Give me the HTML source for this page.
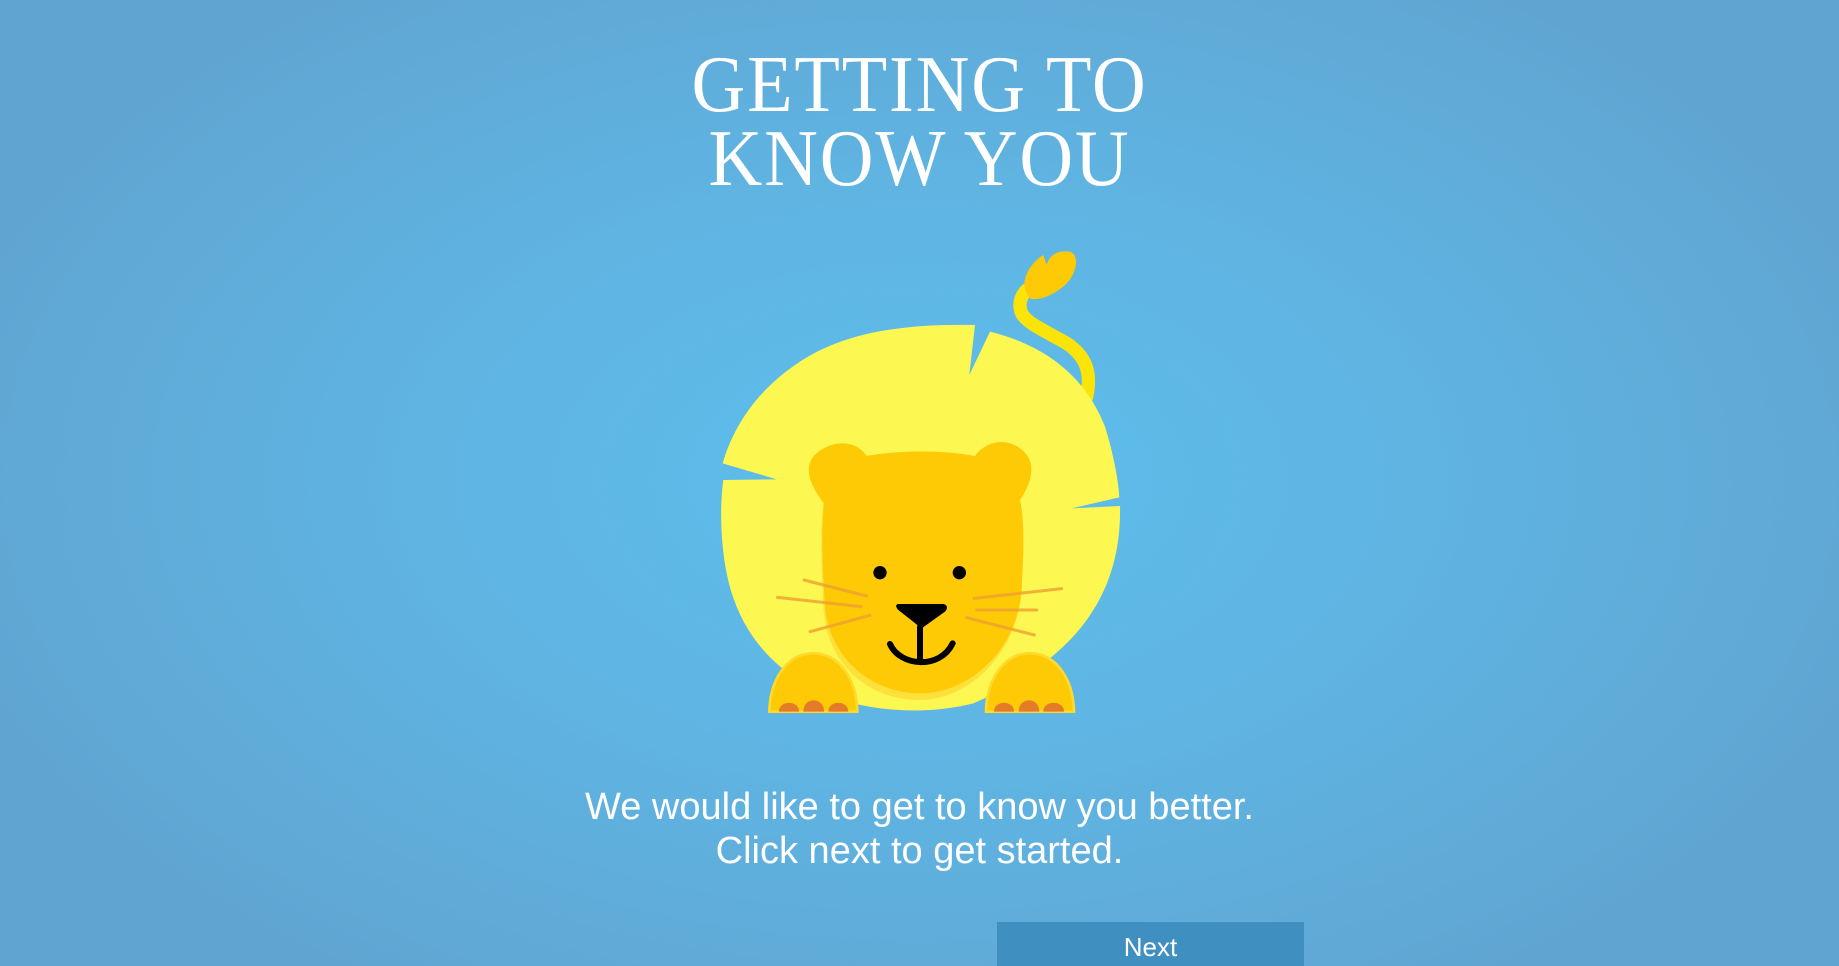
<!DOCTYPE html>
<html><head><meta charset="utf-8"><style>
html,body{margin:0;padding:0;width:1839px;height:966px;overflow:hidden}
body{background:radial-gradient(ellipse 1000px 600px at 920px 480px,#5ebeec 0%,#5fb4e2 50%,#60a5d2 100%);font-family:"Liberation Sans",sans-serif;position:relative}
.t{position:absolute;left:0;width:1839px;text-align:center;color:#fff;font-family:"Liberation Serif",serif;font-size:80px;line-height:74px;top:48px;letter-spacing:2px;transform:scaleX(0.93);transform-origin:920px 0}
.p{position:absolute;left:0;width:1839px;text-align:center;color:#fff;font-size:38px;line-height:44px;top:785px}
.b{position:absolute;left:997px;top:922px;width:307px;height:44px;background:#3f90c0;color:#fff;font-size:26px;text-align:center;line-height:50px}
svg{position:absolute;left:700px;top:240px}
</style></head><body>
<div class="t">GETTING TO<br>KNOW YOU</div>
<svg width="440" height="480" viewBox="0 0 1320 1440">
<path d="M1160 470 C1175 400 1160 350 1100 310 C1040 275 980 250 965 220 C955 195 960 170 980 150" stroke="#fbe40a" stroke-width="40" fill="none" stroke-linecap="round"/>
<path d="M980 160 C960 120 990 70 1030 45 L1040 75 C1050 40 1080 30 1110 35 C1140 45 1130 100 1100 130 C1070 160 1020 185 990 175Z" fill="#fec905"/>
<path d="M825 255 L808 405 L870 275 C1050 320 1160 420 1215 560 C1240 640 1255 720 1258 772 L1115 805 L1260 798 C1262 880 1250 1000 1180 1110 C1100 1240 960 1330 820 1390 C700 1420 560 1420 420 1380 C250 1320 120 1200 80 1000 C60 900 60 790 70 720 L230 718 L68 670 C100 560 170 450 300 365 C430 280 600 250 825 255Z" fill="#fcf851"/>
<path d="M500 648 C600 630 730 630 825 648 C860 600 920 595 960 625 C1010 660 1000 720 960 780 C975 850 970 940 965 1050 C950 1250 800 1380 660 1380 C510 1380 380 1280 370 1100 C365 980 360 880 370 790 C335 740 310 690 340 650 C380 605 460 590 500 648Z" fill="#fee03a"/>
<path d="M500 648 C600 630 730 630 825 648 C860 600 920 595 960 625 C1010 660 1000 720 960 780 C975 850 970 940 965 1050 C950 1240 800 1360 660 1360 C520 1360 390 1260 375 1100 C368 980 362 880 372 790 C335 740 310 690 340 650 C380 605 460 590 500 648Z" fill="#fec905"/>
<g stroke="#f0a030" stroke-width="9" stroke-linecap="round" opacity="0.8">
<line x1="312" y1="1020" x2="500" y2="1068"/><line x1="232" y1="1072" x2="484" y2="1100"/><line x1="330" y1="1175" x2="510" y2="1126"/>
<line x1="822" y1="1075" x2="1085" y2="1046"/><line x1="830" y1="1110" x2="1010" y2="1110"/><line x1="800" y1="1133" x2="1003" y2="1185"/>
</g>
<circle cx="540" cy="998" r="20"/><circle cx="778" cy="998" r="20"/>
<path d="M595 1092 L730 1092 C745 1095 742 1108 735 1115 L665 1165 L595 1110 C585 1100 588 1092 595 1092Z"/>
<path d="M660 1160 L660 1260 M570 1212 C600 1280 720 1290 758 1210" stroke="#000" stroke-width="18" fill="none" stroke-linecap="round"/>
<path d="M208 1415 C210 1320 260 1240 340 1240 C420 1240 470 1320 472 1415Z" fill="#fec905" stroke="#fedb2a" stroke-width="8"/>
<path d="M858 1415 C860 1320 910 1240 990 1240 C1070 1240 1120 1320 1122 1415Z" fill="#fec905" stroke="#fedb2a" stroke-width="8"/>
<g fill="#e57a28">
<path d="M237 1415 C237 1380 297 1380 297 1415Z"/><path d="M310 1415 C310 1370 372 1370 372 1415Z"/><path d="M385 1415 C385 1380 445 1380 445 1415Z"/>
<path d="M882 1415 C882 1380 942 1380 942 1415Z"/><path d="M956 1415 C956 1370 1018 1370 1018 1415Z"/><path d="M1030 1415 C1030 1380 1092 1380 1092 1415Z"/>
</g>
</svg>
<div class="p">We would like to get to know you better.<br>Click next to get started.</div>
<div class="b">Next</div>
</body></html>
